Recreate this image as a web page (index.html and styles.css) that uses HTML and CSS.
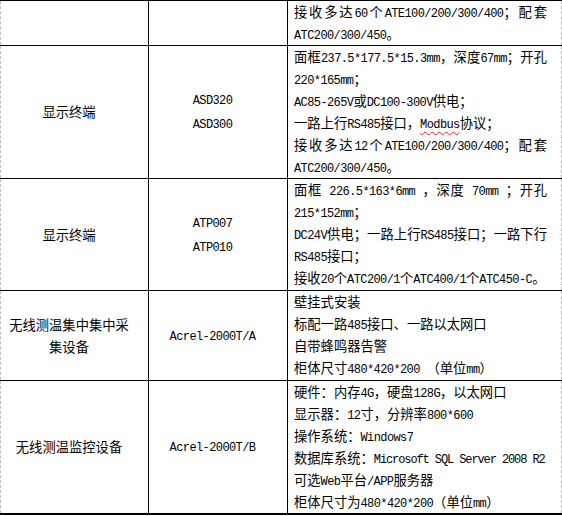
FILE: index.html
```html
<!DOCTYPE html>
<html lang="zh-CN">
<head>
<meta charset="utf-8">
<title>产品清单</title>
<link rel="stylesheet" href="styles.css">
</head>
<body>
<table class="spec">
  <colgroup>
    <col class="c1">
    <col class="c2">
    <col class="c3">
  </colgroup>
  <tbody>
    <tr class="r1">
      <td class="name"></td>
      <td class="model"></td>
      <td class="desc">
        <div class="ln jl">接收多达<span class="en">60</span>个<span class="en">ATE100/200/300/400</span>；配套</div>
        <div class="ln"><span class="en">ATC200/300/450</span>。</div>
      </td>
    </tr>
    <tr class="r2">
      <td class="name">显示终端</td>
      <td class="model"><span class="en">ASD320</span><br><span class="en">ASD300</span></td>
      <td class="desc">
        <div class="ln jl">面框<span class="en">237.5*177.5*15.3mm</span>，深度<span class="en">67mm</span>；开孔</div>
        <div class="ln"><span class="en">220*165mm</span>；</div>
        <div class="ln"><span class="en">AC85-265V</span>或<span class="en">DC100-300V</span>供电；</div>
        <div class="ln">一路上行<span class="en">RS485</span>接口，<span class="en spell">Modbus</span>协议；</div>
        <div class="ln jl">接收多达<span class="en">12</span>个<span class="en">ATE100/200/300/400</span>；配套</div>
        <div class="ln"><span class="en">ATC200/300/450</span>。</div>
      </td>
    </tr>
    <tr class="r3">
      <td class="name">显示终端</td>
      <td class="model"><span class="en">ATP007</span><br><span class="en">ATP010</span></td>
      <td class="desc">
        <div class="ln jl">面框<span class="en"> 226.5*163*6mm </span>，深度<span class="en"> 70mm </span>；开孔</div>
        <div class="ln"><span class="en">215*152mm</span>；</div>
        <div class="ln jl"><span class="en">DC24V</span>供电；一路上行<span class="en">RS485</span>接口；一路下行</div>
        <div class="ln"><span class="en">RS485</span>接口；</div>
        <div class="ln">接收<span class="en">20</span>个<span class="en">ATC200/1</span>个<span class="en">ATC400/1</span>个<span class="en">ATC450-C</span>。</div>
      </td>
    </tr>
    <tr class="r4">
      <td class="name">无线测温集中集中采<br>集设备</td>
      <td class="model"><span class="en">Acrel-2000T/A</span></td>
      <td class="desc">
        <div class="ln">壁挂式安装</div>
        <div class="ln">标配一路<span class="en">485</span>接口、一路以太网口</div>
        <div class="ln">自带蜂鸣器告警</div>
        <div class="ln">柜体尺寸<span class="en">480*420*200 </span>（单位<span class="en">mm</span>）</div>
      </td>
    </tr>
    <tr class="r5">
      <td class="name">无线测温监控设备</td>
      <td class="model"><span class="en">Acrel-2000T/B</span></td>
      <td class="desc">
        <div class="ln">硬件：内存<span class="en">4G</span>，硬盘<span class="en">128G</span>，以太网口</div>
        <div class="ln">显示器：<span class="en">12</span>寸，分辨率<span class="en">800*600</span></div>
        <div class="ln">操作系统：<span class="en">Windows7</span></div>
        <div class="ln">数据库系统：<span class="en tight">Microsoft SQL Server 2008 R2</span></div>
        <div class="ln">可选<span class="en">Web</span>平台<span class="en">/APP</span>服务器</div>
        <div class="ln">柜体尺寸为<span class="en">480*420*200</span>（单位<span class="en">mm</span>）</div>
      </td>
    </tr>
  </tbody>
</table>
</body>
</html>
```

FILE: styles.css
```css
html, body {
  margin: 0;
  padding: 0;
  background: #ffffff;
}

body {
  font-family: "Noto Sans CJK SC", sans-serif;
  font-size: 13.3px;
  color: #000000;
}

.spec {
  border-collapse: collapse;
  table-layout: fixed;
  width: 561px;
  border-left: 1px dashed #bdbdbd;
  border-right: 1px dashed #bdbdbd;
}

.c1 { width: 148px; }
.c2 { width: 139px; }
.c3 { width: 274px; }

.spec td {
  border-top: 1px solid #000000;
  border-bottom: 1px solid #000000;
  padding: 0;
  line-height: 22px;
}

.spec td + td {
  border-left: 1px solid #000000;
}

.r5 td {
  border-bottom-width: 2px;
}

.r3 td,
.r4 td {
  padding-bottom: 1px;
}

.name,
.model {
  text-align: center;
  vertical-align: middle;
  padding: 0 13px 0 2px !important;
  white-space: nowrap;
}

.desc {
  vertical-align: top;
  padding: 0 14px 0 6px !important;
}

.r3 .desc,
.r4 .desc {
  padding-bottom: 1px !important;
}

.ln {
  white-space: nowrap;
  height: 22px;
}

.jl {
  text-align: justify;
  text-align-last: justify;
}

.en {
  font-family: "Liberation Mono", monospace;
  font-size: 12px;
  letter-spacing: -0.6px;
}

.tight {
  letter-spacing: -1.1px;
}

.spell {
  text-decoration: underline wavy #e02020;
  text-decoration-thickness: 1px;
  text-underline-offset: 3px;
  text-decoration-skip-ink: none;
}
```
